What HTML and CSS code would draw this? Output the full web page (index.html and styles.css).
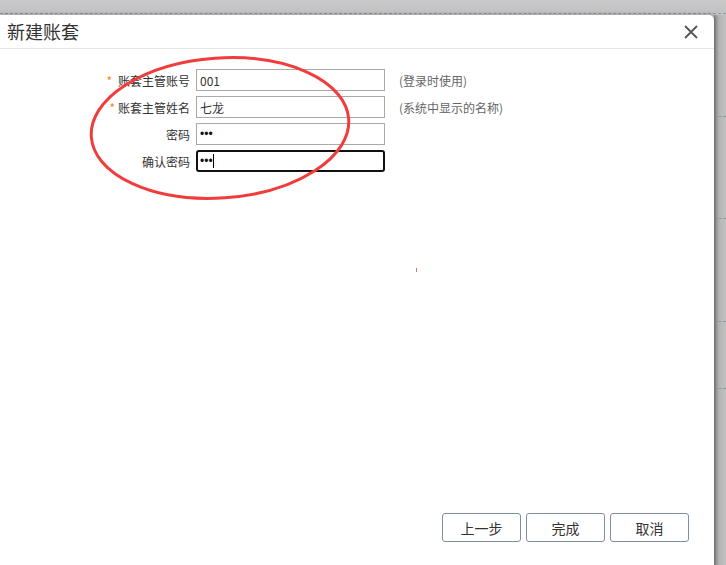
FILE: index.html
```html
<!DOCTYPE html>
<html lang="zh-CN">

<head>
    <meta charset="UTF-8">
    <title>新建账套</title>
    <link rel="stylesheet" href="styles.css">
</head>

<body>
    <div class="topbar"></div>
    <div class="stage">
        <div class="dialog">
            <div class="dialog-head">
                <span class="dialog-title">新建账套</span>
                <span class="close-btn">
                    <svg width="14" height="14" viewBox="0 0 14 14">
                        <path d="M1 1 L13 13 M13 1 L1 13" stroke="#555" stroke-width="1.8" fill="none"/>
                    </svg>
                </span>
            </div>

            <div class="dialog-body">
                <div class="form-row">
                    <label class="form-label"><span class="req req-1">*</span>账套主管账号</label>
                    <input class="form-input" type="text" value="001">
                    <span class="hint">(登录时使用)</span>
                </div>
                <div class="form-row">
                    <label class="form-label"><span class="req req-2">*</span>账套主管姓名</label>
                    <input class="form-input" type="text" value="七龙">
                    <span class="hint">(系统中显示的名称)</span>
                </div>
                <div class="form-row">
                    <label class="form-label">密码</label>
                    <input class="form-input pwd" type="text" value="•••">
                </div>
                <div class="form-row">
                    <label class="form-label">确认密码</label>
                    <span class="input-wrap">
                        <input class="form-input pwd focused" type="text" value="•••">
                    </span>
                </div>

                <!-- red hand-drawn mark from the screenshot -->
                <svg class="mark" width="300" height="170" viewBox="0 0 300 170">
                    <ellipse cx="135" cy="75" rx="129" ry="70" transform="rotate(-4 135 75)" stroke="#f23c3c" stroke-width="3" fill="none"/>
                </svg>
                <span class="dot"></span>
            </div>

            <div class="dialog-foot">
                <button class="btn">上一步</button>
                <button class="btn">完成</button>
                <button class="btn">取消</button>
            </div>
        </div>
        <div class="side">
            <div class="side-line" style="top: 101px"></div>
            <div class="side-line" style="top: 203px"></div>
            <div class="side-line" style="top: 306px"></div>
            <div class="side-line" style="top: 373px"></div>
        </div>
    </div>
</body>

</html>
```

FILE: styles.css
```css
body {
    margin: 0;
    padding: 0;
    background-color: #c6c6c6;
    font-family: "Noto Sans CJK SC", "Liberation Sans", sans-serif;
    color: #333;
    overflow: hidden;
}

.topbar {
    height: 13px;
    border-bottom: 1px dashed #8d99a6;
    background: linear-gradient(#c9c9c9, #c2c2c2);
}

.stage {
    display: flex;
    height: 551px;
    padding-top: 1px;
}

.dialog {
    width: 714px;
    height: 551px;
    background-color: #fff;
    border-top-right-radius: 5px;
    display: flex;
    flex-direction: column;
    position: relative;
    z-index: 1;
    box-shadow: 1px 0 4px rgba(0, 0, 0, 0.35);
}

.dialog-head {
    height: 33px;
    border-bottom: 1px solid #e5e5e5;
    display: flex;
    align-items: center;
    justify-content: space-between;
    padding: 0 16px 0 7px;
}

.dialog-title {
    font-size: 18px;
    color: #333;
    line-height: 33px;
}

.close-btn {
    display: flex;
    margin-top: 1px;
}

.dialog-body {
    flex: 1;
    position: relative;
    padding-top: 20px;
}

.form-row {
    display: flex;
    align-items: center;
    height: 22px;
    margin-bottom: 5px;
}

.form-label {
    text-align: right;
    font-size: 12px;
    color: #333;
    padding-right: 6px;
    box-sizing: border-box;
    width: 196px;
}

.req {
    color: #f08a24;
    font-size: 12px;
}

.req-1 {
    margin-right: 6px;
}

.req-2 {
    margin-right: 3px;
}

.form-input {
    width: 189px;
    height: 22px;
    box-sizing: border-box;
    border: 1px solid #a9a9a9;
    padding: 0 3px;
    font-size: 12px;
    font-family: "Noto Sans CJK SC", "Liberation Sans", sans-serif;
    color: #333;
    outline: none;
    margin: 0;
}

.pwd {
    font-family: "Liberation Sans", sans-serif;
    font-size: 12px;
    letter-spacing: 0;
    color: #111;
}

.input-wrap {
    display: flex;
    position: relative;
}

/* text caret in the focused field */
.input-wrap::after {
    content: "";
    position: absolute;
    left: 17px;
    top: 4px;
    width: 1px;
    height: 14px;
    background-color: #000;
}

.focused {
    border: 2px solid #111;
    border-radius: 3px;
    padding: 0 2px;
}

.hint {
    font-size: 12px;
    color: #666;
    margin-left: 14px;
}

.mark {
    position: absolute;
    left: 85px;
    top: 4px;
}

.dot {
    position: absolute;
    left: 416px;
    top: 219px;
    width: 1px;
    height: 4px;
    background-color: #c9786f;
}

.dialog-foot {
    display: flex;
    justify-content: flex-end;
    gap: 5px;
    padding: 0 25px 24px 0;
}

.btn {
    width: 79px;
    height: 29px;
    background-color: #fff;
    border: 1px solid #7d8fa6;
    border-radius: 3px;
    font-size: 14px;
    font-family: "Noto Sans CJK SC", "Liberation Sans", sans-serif;
    color: #333;
    padding: 0;
    cursor: pointer;
}

.side {
    flex: 1;
    position: relative;
    background: linear-gradient(to right, #8f8f8f, #b4b4b4 40%, #c2c2c2);
}

.side-line {
    position: absolute;
    left: 0;
    right: 0;
    border-top: 1px dashed #8d99a6;
}
```
